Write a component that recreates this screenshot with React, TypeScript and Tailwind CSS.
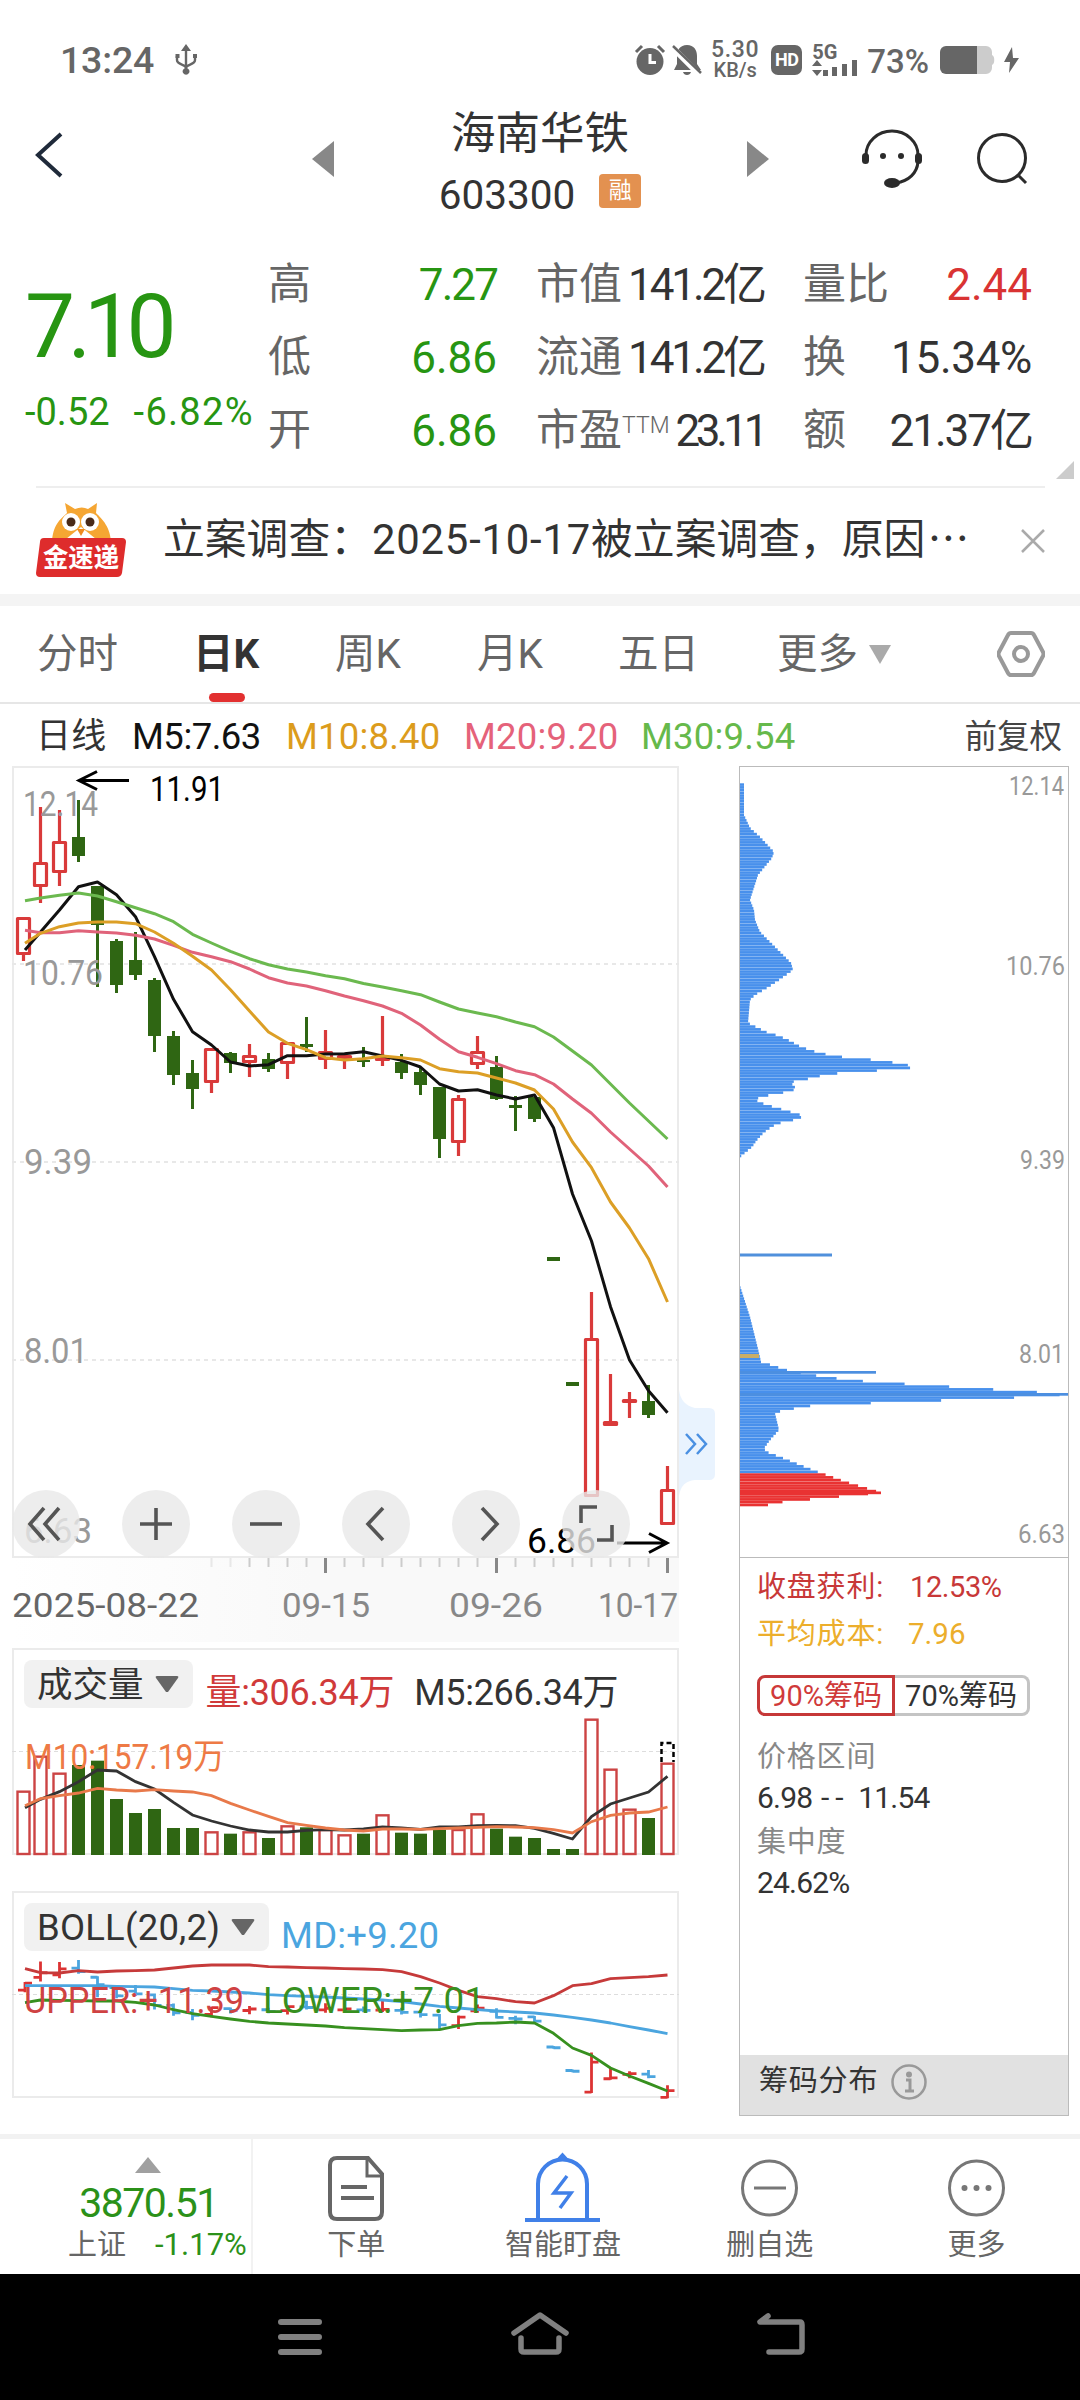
import React, { FC, ReactNode } from "react";

const RED = "#d93a3a";
const GREEN = "#2f6613";

// one row per trading day: up / down, high, body top, body bottom, low
type Candle = [string, number, number, number, number];

const candles: Candle[] = [
  ["u", 917, 917, 955, 961],
  ["u", 807, 862, 887, 903],
  ["u", 810, 841, 873, 886],
  ["d", 800, 837, 856, 862],
  ["d", 886, 886, 925, 987],
  ["d", 939, 941, 985, 993],
  ["d", 932, 960, 975, 980],
  ["d", 978, 980, 1036, 1052],
  ["d", 1031, 1036, 1075, 1085],
  ["d", 1060, 1073, 1089, 1109],
  ["u", 1048, 1048, 1083, 1093],
  ["d", 1052, 1053, 1063, 1073],
  ["u", 1044, 1055, 1063, 1077],
  ["d", 1053, 1059, 1069, 1072],
  ["u", 1042, 1042, 1064, 1079],
  ["d", 1017, 1044, 1047, 1052],
  ["u", 1030, 1051, 1060, 1069],
  ["u", 1055, 1055, 1060, 1069],
  ["d", 1047, 1060, 1062, 1067],
  ["u", 1016, 1057, 1061, 1066],
  ["d", 1054, 1062, 1073, 1079],
  ["d", 1067, 1072, 1085, 1095],
  ["d", 1087, 1087, 1139, 1158],
  ["u", 1095, 1098, 1143, 1156],
  ["u", 1036, 1051, 1065, 1069],
  ["d", 1056, 1067, 1099, 1100],
  ["d", 1096, 1105, 1108, 1131],
  ["d", 1097, 1097, 1119, 1122],
  ["d", 1257, 1257, 1261, 1261],
  ["d", 1382, 1382, 1386, 1386],
  ["u", 1292, 1338, 1497, 1497],
  ["u", 1374, 1421, 1426, 1426],
  ["u", 1392, 1399, 1403, 1418],
  ["d", 1385, 1401, 1415, 1418],
  ["u", 1466, 1489, 1525, 1525],
];

const ma5 = [950, 932, 910, 886.7, 882, 894.7, 916.7, 956.7, 999.3, 1031.7, 1045, 1062, 1066, 1064.7, 1055.7, 1055.7, 1054, 1053.7, 1051.7, 1056, 1060.3, 1067, 1084, 1091, 1089.7, 1095, 1099, 1095, 1127.7, 1194, 1241, 1306.7, 1360, 1390.7, 1412.7];
const ma10 = [943.3, 933.3, 926.7, 923, 922, 922, 923.7, 932, 943.3, 956.3, 970, 989.7, 1011, 1032, 1043.3, 1049.7, 1057.7, 1060, 1058.7, 1056, 1057.7, 1060, 1068.7, 1071.7, 1073, 1078, 1083, 1090, 1109, 1142, 1167.7, 1202, 1228, 1258.7, 1302];
const ma20 = [930.3, 932.7, 932.7, 930.7, 932, 933, 935.3, 939, 945.3, 952.3, 956.7, 961.7, 969, 977.7, 983, 986, 990.7, 996, 1000.7, 1006, 1013.3, 1025, 1039.3, 1051.7, 1057.3, 1063.7, 1070.7, 1074.7, 1084, 1099, 1113.3, 1132, 1149, 1166, 1187];
const ma30 = [900.7, 898, 895.3, 893, 896, 901.7, 907.7, 913.7, 921.7, 934.3, 943, 951.3, 958.7, 964.7, 969, 972, 975.7, 978.7, 983.5, 987, 990.7, 994.7, 1002, 1009, 1013, 1016.7, 1022, 1026.7, 1037, 1051, 1065, 1084, 1103, 1121, 1139];

// sub charts, in thirds of a pixel from the top of each chart
const volume = [452, 347, 398, 375, 362, 477, 519, 507, 564, 564, 574, 581, 574, 594, 556, 562, 567, 583, 581, 523, 578, 581, 569, 567, 520, 566, 590, 594, 627, 627, 236, 386, 506, 534, 368];
const volMa5 = [503, 478, 455, 425, 390, 393, 425, 447, 487, 525, 543, 558, 570, 576, 576, 571, 569, 570, 567, 561, 564, 568, 561, 561, 557, 556, 557, 565, 580, 597, 530, 492, 474, 456, 409];
const volMa10 = [497, 476, 467, 459, 445, 450, 453, 449, 453, 456, 467, 490, 510, 529, 548, 556, 564, 570, 573, 567, 567, 568, 566, 564, 562, 560, 561, 563, 569, 579, 545, 526, 519, 516, 501];
const upper = [296, 308, 309, 302, 306, 303, 302, 300, 294, 288, 285, 285, 285, 290, 291, 293, 294, 296, 297, 299, 305, 320, 339, 361, 380, 386, 395, 399, 377, 347, 341, 326, 323, 320, 315];
const middle = [347, 347, 347, 347, 347, 349, 350, 351, 356, 361, 363, 366, 369, 374, 377, 379, 381, 384, 387, 390, 395, 402, 409, 414, 419, 423, 426, 429, 435, 442, 450, 459, 470, 480, 491];
const lower = [398, 390, 391, 392, 393, 393, 397, 405, 419, 431, 439, 447, 454, 459, 462, 465, 468, 473, 476, 479, 482, 480, 479, 467, 460, 459, 456, 459, 490, 534, 556, 594, 618, 640, 663];

// chip distribution outline: [y, width]
const chipsTop: [number, number][] = [
  [783, 4], [815, 4], [828, 10], [837, 20], [852, 34], [858, 32], [875, 18], [900, 10], [910, 14], [920, 15], [932, 20], [947, 35], [963, 51], [970, 53], [980, 39], [988, 27], [995, 15], [1000, 10], [1023, 8], [1032, 26], [1036, 39], [1040, 48], [1047, 61], [1052, 76], [1055, 89], [1057.7, 107], [1060.4, 139], [1063.3, 158], [1066, 172], [1069, 169], [1071.7, 118], [1074.4, 86], [1077, 77], [1080, 63], [1082.4, 50], [1085, 53], [1088.4, 56], [1091, 52], [1093.7, 38], [1096.4, 23], [1099.4, 15], [1102, 19], [1104.7, 26], [1107.4, 35], [1110, 44], [1112.7, 53], [1115.7, 63], [1118.4, 60], [1121, 50], [1123.7, 37], [1129.4, 28], [1133.4, 23], [1140, 17], [1147, 12], [1157, 0],
];
const chipsBottom: [number, number][] = [
  [1286, 0], [1317, 10], [1353, 19], [1362, 21], [1363.4, 26], [1366.7, 36], [1370, 46], [1375, 71], [1377.7, 91], [1380.4, 111], [1383.3, 154], [1386, 198], [1388.7, 241], [1391.4, 285], [1394.3, 328], [1397, 293], [1399.7, 220], [1402.6, 147], [1405.3, 74], [1408, 58], [1410.7, 42], [1413.4, 35], [1430, 39], [1440, 30], [1448.4, 24], [1451.7, 26], [1454.4, 33], [1457, 40], [1471, 75], [1473.4, 82], [1481.7, 105], [1492.7, 141], [1495.4, 113], [1498, 85], [1500.7, 57], [1503.7, 28], [1505, 28],
];

const cx = (i: number) => 21.5 + i * 19;
const toLine = (ys: number[]) =>
  ys.map((y, i) => `${i === 0 ? 25 : cx(i)},${y}`).join(" ");
const third = (top: number, ys: number[]) => ys.map((y) => top + y / 3);

const widthAt = (points: [number, number][], y: number) => {
  for (let i = 1; i < points.length; i++) {
    const [y0, w0] = points[i - 1];
    const [y1, w1] = points[i];
    if (y <= y1) return w0 + ((w1 - w0) * Math.max(0, y - y0)) / (y1 - y0);
  }
  return 0;
};

interface LabelProps {
  x: number;
  y: number;
  w: number;
  size?: number;
  fill?: string;
  children: string;
}

const Label: FC<LabelProps> = ({ x, y, w, size = 35, fill = "#999", children }) => (
  <text x={x} y={y} fontSize={size} fill={fill} textLength={w} lengthAdjust="spacingAndGlyphs">
    {children}
  </text>
);

const StatusBar: FC = () => (
  <div className="h-[100px] pt-5 pl-[60px] pr-[60px] flex items-center justify-between text-[#666]">
    <div className="flex items-center">
      <span className="text-[37.500px] font-medium tracking-[-0.2px]">13:24</span>
      <svg className="ml-[20px]" width="24" height="32" viewBox="0 0 24 32" fill="none" stroke="#666" strokeWidth="2.4">
        <path d="M12 5v21M3 12v4c0 5 9 4 9 8M21 12v4c0 5-9 4-9 8" />
        <path d="M12 0l5 7H7z M12 24a3.4 3.4 0 1 0 .1 0zM1.500 10h4v4h-4zM19 10h4v4h-4z" fill="#666" stroke="none" />
      </svg>
    </div>
    <div className="flex items-center">
      <svg width="32" height="32" viewBox="0 0 32 32">
        <circle cx="16" cy="17.500" r="13.500" fill="#666" />
        <path d="M16 10v8.500h6" fill="none" stroke="#fff" strokeWidth="3" />
        <path d="M2 8l6-6M30 8l-6-6" stroke="#666" strokeWidth="3" />
      </svg>
      <svg className="ml-[5px]" width="32" height="32" viewBox="0 0 32 32">
        <path d="M16 1c7 0 10 5 10 11v8l4 6H3l3-6v-8C6 6 9 1 16 1zM12 28h8c-1 4-7 4-8 0z" fill="#666" />
        <path d="M1 3l28 28" stroke="#fff" strokeWidth="6" />
        <path d="M2 2l28 27" stroke="#666" strokeWidth="2.500" />
      </svg>
      <div className="ml-[7px] w-[50px] flex flex-col items-center font-medium">
        <span className="text-[23px] leading-[20px] tracking-[0.7px]">5.30</span>
        <span className="text-[20px] leading-[21px]">KB/s</span>
      </div>
      <span className="ml-[11px] w-[31px] h-[30px] rounded-[7px] bg-[#666] text-white text-[18px] leading-[30px] font-bold text-center tracking-[-0.5px]">
        HD
      </span>
      <div className="ml-[10px] w-[46px] flex flex-col">
        <span className="text-[20px] leading-[15px] font-bold">5G</span>
        <svg width="46" height="16" viewBox="0 0 46 16" fill="#666">
          <path d="M5 0l5 6H0zM5 16l5-6H0zM11 10h5v6h-5zM20 7h5v9h-5zM30 4h5v12h-5zM40-1h5v17h-5z" />
        </svg>
      </div>
      <span className="ml-[9px] mt-[2px] text-[33px] leading-none font-medium">73%</span>
      <svg className="ml-[11px]" width="55" height="28" viewBox="0 0 55 28">
        <path d="M36 0h10a6 6 0 0 1 6 6v3c3 1 3 9 0 10v3a6 6 0 0 1-6 6H36z" fill="#ccc" />
        <path d="M6 0h31v28H6a6 6 0 0 1-6-6V6a6 6 0 0 1 6-6z" fill="#666" />
      </svg>
      <svg className="ml-[8px]" width="17" height="26" viewBox="0 0 17 26" fill="#666">
        <path d="M9 0L1 15h6l-1 11L16 11h-6z" />
      </svg>
    </div>
  </div>
);

const Header: FC = () => (
  <header className="h-[140px] pl-[35px] pr-[52px] flex items-center justify-between">
    <svg className="-mt-[30px]" width="28" height="46" viewBox="0 0 28 46" fill="none" stroke="#1f2a3a" strokeWidth="4">
      <path d="M26 2L3 23l23 21" />
    </svg>
    <div className="ml-[156px] flex items-center">
      <svg className="-mt-[22px]" width="22" height="36" viewBox="0 0 22 36" fill="#888">
        <path d="M22 0v36L0 18z" />
      </svg>
      <div className="w-[413px] -mt-[9px] flex flex-col items-center">
        <h1 className="text-[44.500px] leading-[60px] text-[#333]">海南华铁</h1>
        <div className="h-[64px] flex items-center">
          <span className="text-[40.500px] text-[#333]">603300</span>
          <span className="ml-[24px] -mt-[9px] w-[42px] h-[34px] rounded-[4px] bg-[#e39150] text-white text-[23px] leading-[33px] text-center">
            融
          </span>
        </div>
      </div>
      <svg className="-mt-[22px]" width="22" height="36" viewBox="0 0 22 36" fill="#888">
        <path d="M0 0v36l22-18z" />
      </svg>
    </div>
    <div className="-mt-[22px] flex items-center gap-[54px]">
      <svg width="62" height="60" viewBox="0 0 62 60" fill="none" stroke="#2b2b2b" strokeWidth="3">
        <path d="M5 26a26 24 0 0 1 52 0M57 33c-1 11-9 19-22 21" />
        <rect x="1" y="24" width="7" height="11" rx="3.500" fill="#2b2b2b" stroke="none" />
        <rect x="54" y="24" width="7" height="11" rx="3.500" fill="#2b2b2b" stroke="none" />
        <ellipse cx="31" cy="54" rx="8" ry="5" fill="#2b2b2b" stroke="none" />
        <circle cx="22" cy="27" r="3" fill="#2b2b2b" stroke="none" />
        <circle cx="40" cy="27" r="3" fill="#2b2b2b" stroke="none" />
      </svg>
      <svg width="51" height="52" viewBox="0 0 51 52" fill="none" stroke="#2b2b2b" strokeWidth="3">
        <circle cx="25" cy="25" r="23.500" />
        <path d="M41 42l8 8" />
      </svg>
    </div>
  </header>
);

const stats = [
  { label: "高", value: "7.27", color: "text-[#279512] tracking-[-1.9px]" },
  { label: "市值", value: "141.2亿", color: "text-[#333] tracking-[-3.1px]" },
  { label: "量比", value: "2.44", color: "text-[#d93333]" },
  { label: "低", value: "6.86", color: "text-[#279512]" },
  { label: "流通", value: "141.2亿", color: "text-[#333] tracking-[-3.1px]" },
  { label: "换", value: "15.34%", color: "text-[#333] tracking-[-0.3px]" },
  { label: "开", value: "6.86", color: "text-[#279512]" },
  { label: "市盈", sup: "TTM", value: "23.11", color: "text-[#333] tracking-[-4.4px]" },
  { label: "额", value: "21.37亿", color: "text-[#333] tracking-[-2px]" },
];

const Quote: FC = () => (
  <section className="relative h-[246px] flex">
    <div className="w-[268px] pl-[25px] pt-[37px] text-[#279512] whitespace-nowrap">
      <div className="text-[89px] leading-[100px] tracking-[-7.300px]">7.10</div>
      <div className="mt-[10px] flex gap-[24px] text-[38px] leading-[50px]">
        <span>-0.52</span>
        <span className="tracking-[1.3px]">-6.82%</span>
      </div>
    </div>
    <div className="pt-[8px] grid grid-cols-[229px_228px_229px] auto-rows-[73px] gap-x-[39px] whitespace-nowrap">
      {stats.map((item) => (
        <div key={item.label} className="flex items-center justify-between text-[43px] leading-none">
          <span className="flex text-[#666]">
            {item.label}
            {item.sup && <sup className="mt-[5px] text-[23px] leading-none top-0 font-light">{item.sup}</sup>}
          </span>
          <span className={`text-[44px] ${item.color}`}>{item.value}</span>
        </div>
      ))}
    </div>
    <svg className="absolute right-[6px] bottom-[7px]" width="18" height="18" viewBox="0 0 18 18" fill="#ccc">
      <path d="M18 0v18H0z" />
    </svg>
  </section>
);

const News: FC = () => (
  <section className="ml-9 mr-[35px] h-[108px] border-t-2 border-[#eee] flex items-center">
    <svg className="-mt-[2px]" width="90" height="76" viewBox="0 0 90 76">
      <path d="M16 42C16 22 26 16 31 11L29 1l10 6q7-3 13 0l9-6-1 10c6 6 15 14 15 31z" fill="#f5a633" />
      <path d="M30 37l15-12 15 12v6H30z" fill="#fff" />
      <circle cx="35" cy="20" r="9" fill="#fff" />
      <circle cx="54" cy="20" r="9" fill="#fff" />
      <circle cx="35" cy="20" r="4.500" fill="#4a2a18" />
      <circle cx="54" cy="20" r="4.500" fill="#4a2a18" />
      <path d="M41 27l4 7 4-7z" fill="#ee8a20" />
      <path d="M8 36h78q4 0 4 4l-4 31q-1 4-5 4H4q-4 0-4-4l4-31q0-4 4-4z" fill="#de2c2c" />
      <text x="7" y="65" fontSize="26" fontWeight="700" fill="#fff" textLength="76" lengthAdjust="spacingAndGlyphs">金速递</text>
    </svg>
    <p className="ml-[37px] -mt-[5px] flex-1 text-[41.800px] text-[#333] whitespace-nowrap">
      立案调查：<span className="tracking-[0.8px]">2025-10-17</span>被立案调查，原因
      <span className="ml-[2px] font-['Noto_Sans_CJK_SC']">⋯</span>
    </p>
    <svg width="24" height="24" viewBox="0 0 24 24" stroke="#aaa" strokeWidth="2.500">
      <path d="M1 1l22 22M23 1L1 23" />
    </svg>
  </section>
);

const tabs = [
  { name: "分时", style: "w-[156px]" },
  { name: "日K", style: "w-[142px] text-[#333] font-bold" },
  { name: "周K", style: "w-[142px]" },
  { name: "月K", style: "w-[141px]" },
  { name: "五日", style: "w-[159px]" },
  { name: "更多", style: "w-[91px]" },
];

const Tabs: FC = () => (
  <nav className="h-[98px] pl-[37px] pr-[35px] border-b-2 border-[#e6e6e6] flex items-center text-[40.500px] text-[#666]">
    {tabs.map((tab, index) => (
      <div key={tab.name} className={`relative h-full leading-[97px] ${tab.style}`}>
        {tab.name}
        {index === 1 && <span className="absolute left-[16px] bottom-0 w-[36px] h-[9px] rounded-full bg-[#e23030]" />}
      </div>
    ))}
    <svg width="24" height="20" viewBox="0 0 24 20" fill="#aaa">
      <path d="M1 1h22L12 20z" />
    </svg>
    <svg className="ml-auto" width="48" height="46" viewBox="0 0 48 46" fill="none" stroke="#999" strokeWidth="4">
      <path d="M14 2h20q2 0 3 2l9 17q1 2 0 4l-9 17q-1 2-3 2H14q-2 0-3-2L2 25q-1-2 0-4l9-17q1-2 3-2z" />
      <circle cx="24" cy="23" r="7" />
    </svg>
  </nav>
);

const MaRow: FC = () => (
  <div className="h-[62px] pt-[4px] pl-[36px] pr-[18px] flex items-center text-[36.500px] tracking-[0.2px] whitespace-nowrap">
    <span className="w-[96px] text-[35px] text-[#333]">日线</span>
    <span className="w-[154px] text-[#111] tracking-[-0.5px]">M5:7.63</span>
    <span className="w-[178px] text-[#dc9c1c]">M10:8.40</span>
    <span className="w-[177px] text-[#e5627a]">M20:9.20</span>
    <span className="text-[#66b94b]">M30:9.54</span>
    <span className="ml-auto text-[32.500px] text-[#444] tracking-normal">前复权</span>
  </div>
);

const KLine: FC = () => (
  <svg width="667" height="876" viewBox="12 766 667 876">
    <defs>
      <linearGradient id="axis" x1="0" x2="1" y1="0" y2="0">
        <stop offset="0" stopColor="#fff" />
        <stop offset="0.45" stopColor="#f9f9f9" />
        <stop offset="1" stopColor="#f9f9f9" />
      </linearGradient>
    </defs>
    <rect x="12" y="1558" width="667" height="84" fill="url(#axis)" />
    <rect x="13" y="767" width="665" height="790" fill="none" stroke="#ebebeb" strokeWidth="2" />
    {[964, 1162, 1360].map((y) => (
      <path key={y} d={`M12 ${y}H679`} stroke="#e8e8e8" strokeWidth="2" strokeDasharray="4 4" />
    ))}
    {candles.map(([dir, high, top, bottom, low], i) => {
      const x = i === 0 ? 23.5 : cx(i);
      if (dir === "d") {
        return (
          <g key={i} fill={GREEN}>
            <rect x={x - 1.5} y={high} width="3" height={low - high} />
            <rect x={x - 6.5} y={top} width="13" height={bottom - top} />
          </g>
        );
      }
      return (
        <g key={i} stroke={RED} strokeWidth="3.200" fill="none">
          <path d={`M${x} ${high}V${top}M${x} ${bottom}V${low}`} />
          <rect x={x - 6} y={top + 1.5} width="12" height={Math.max(bottom - top - 3, 1)} strokeLinejoin="round" />
        </g>
      );
    })}
    <g fill="none" strokeWidth="3" strokeLinejoin="round">
      <polyline points={toLine(ma5)} stroke="#111" />
      <polyline points={toLine(ma20)} stroke="#e0637a" />
      <polyline points={toLine(ma30)} stroke="#6bb94f" />
      <polyline points={toLine(ma10)} stroke="#dc9f26" />
    </g>
    <Label x={23} y={816} w={75}>12.14</Label>
    <Label x={23} y={985} w={80}>10.76</Label>
    <Label x={24} y={1174} w={68}>9.39</Label>
    <Label x={24} y={1363} w={64}>8.01</Label>
    <Label x={24} y={1543} w={68}>6.63</Label>
    <Label x={150} y={801} w={74} fill="#000">11.91</Label>
    <Label x={527} y={1553} w={69} fill="#000">6.86</Label>
    <g stroke="#000" strokeWidth="3" fill="none">
      <path d="M129 780.500H79M97 771.500l-18 9 18 9M617 1543h50M649 1533.500l18 9.500-18 9.500" />
    </g>
    {Array.from({ length: 25 }, (_, k) => k + 10).map((i) => {
      const major = i === 16 || i === 25 || i === 34;
      return (
        <path
          key={i}
          d={`M${cx(i)} 1558v${major ? 15 : 9}`}
          stroke={major ? "#888" : "#ccc"}
          strokeWidth={major ? 3 : 2}
          opacity={i < 12 ? 0.4 : 1}
        />
      );
    })}
    <Label x={12} y={1617} w={187} size={34} fill="#666">2025-08-22</Label>
    <Label x={282} y={1617} w={88} size={34} fill="#888">09-15</Label>
    <Label x={449} y={1617} w={94} size={34} fill="#888">09-26</Label>
    <Label x={598} y={1617} w={80} size={34} fill="#888">10-17</Label>
  </svg>
);

const controls = [
  "M28 14L14 30l14 16M43 14L29 30l14 16",
  "M30 14v32M14 30h32",
  "M14 30h32",
  "M37 14L22 30l15 16",
  "M26 14l15 16-15 16",
  "M15 29V13h16M46 31v15H31",
];

const Controls: FC = () => (
  <div className="absolute left-0 top-[724px] flex gap-[42px]">
    {controls.map((d) => (
      <span key={d} className="w-[68px] h-[68px] rounded-full bg-[#e8e8e8]/80 flex items-center justify-center">
        <svg width="60" height="60" viewBox="0 0 60 60" fill="none" stroke="#555" strokeWidth="3.600">
          <path d={d} />
        </svg>
      </span>
    ))}
  </div>
);

const Pill: FC<{ children: ReactNode }> = ({ children }) => (
  <span className="h-12 px-[13px] rounded-lg bg-[#f1f1f1] text-[#333] flex items-center gap-[10px]">
    {children}
    <svg width="26" height="18" viewBox="0 0 26 18" fill="#666">
      <path d="M3 1h20q2 0 1 2L14 17h-2L2 3q-1-2 1-2z" />
    </svg>
  </span>
);

const Volume: FC = () => (
  <div className="relative mt-[6px] h-[208px] text-[36px] whitespace-nowrap">
    <svg className="absolute inset-0" width="667" height="208" viewBox="12 1648 667 208">
      <rect x="13" y="1649" width="665" height="205" fill="none" stroke="#ebebeb" strokeWidth="2" />
      <path d="M12 1751.500H679" stroke="#ddd" strokeDasharray="4 3" />
      {volume.map((v, i) => {
        const x = i === 0 ? 23.5 : cx(i);
        const y = 1640 + v / 3;
        return candles[i][0] === "d" ? (
          <rect key={i} x={x - 6.5} y={y} width="13" height={1855 - y} fill={GREEN} />
        ) : (
          <rect key={i} x={x - 6} y={y + 1} width="12" height={1853 - y} fill="#fff" stroke="#cc4444" strokeWidth="2.400" />
        );
      })}
      <path d="M661.500 1762v-19h12v19" fill="none" stroke="#000" strokeWidth="2.500" strokeDasharray="5 3" />
      <polyline points={toLine(third(1640, volMa5))} fill="none" stroke="#333" strokeWidth="2.800" />
      <polyline points={toLine(third(1640, volMa10))} fill="none" stroke="#e8794a" strokeWidth="2.800" />
      <Label x={25} y={1769} w={200} fill="#ee7a45">M10:157.19万</Label>
    </svg>
    <div className="relative pl-3 pt-3 flex items-start">
      <Pill>
        <span className="pt-[4px] text-[35.500px]">成交量</span>
      </Pill>
      <span className="ml-[13px] mt-[7px] leading-[52px] text-[#d03a3a] tracking-[-0.3px]">量:306.34万</span>
      <span className="ml-[20px] mt-[7px] leading-[52px] text-[#333] tracking-[-0.3px]">M5:266.34万</span>
    </div>
  </div>
);

const BLUE = "#4ba5df";

const bollY = (y: number) => 1870 + (277 + (y - 806.7) * 0.564) / 3;

const Boll: FC = () => (
  <div className="relative mt-[35px] h-[208px] text-[36.500px] whitespace-nowrap">
    <svg className="absolute inset-0 overflow-visible" width="667" height="208" viewBox="12 1891 667 208">
      <rect x="13" y="1892" width="665" height="205" fill="none" stroke="#ebebeb" strokeWidth="2" />
      <path d="M12 1994.500H679" stroke="#ddd" strokeDasharray="4 3" />
      {candles.map(([dir, high, top, bottom, low], i) => {
        const x = i === 0 ? 25 : cx(i);
        const up = dir === "u";
        const open = bollY(up ? bottom : top);
        const close = bollY(up ? top : bottom);
        return (
          <path
            key={i}
            d={`M${x - 7} ${open}H${x}M${x} ${close}H${x + 7}M${x} ${bollY(high) - 1}V${bollY(low) + 1}`}
            stroke={up ? "#dc3333" : BLUE}
            strokeWidth="2.800"
          />
        );
      })}
      <g fill="none" strokeWidth="2.800" strokeLinejoin="round">
        <polyline points={toLine(third(1870, upper))} stroke="#c63a3a" />
        <polyline points={toLine(third(1870, middle))} stroke={BLUE} />
        <polyline points={toLine(third(1870, lower))} stroke="#37901f" />
      </g>
      <Label x={24} y={2012.500} w={220} size={36} fill="#cf4242">UPPER:+11.39</Label>
      <Label x={263} y={2012.500} w={222} size={36} fill="#37901f">LOWER:+7.01</Label>
    </svg>
    <div className="relative pl-3 pt-3 flex items-start">
      <Pill>
        <span className="pt-[3px] tracking-[0.2px]">BOLL(20,2)</span>
      </Pill>
      <span className="ml-[12px] mt-[7px] leading-[52px] text-[#4ba5df] tracking-[0.2px]">MD:+9.20</span>
    </div>
  </div>
);

const Bars: FC<{ points: [number, number][]; from: number; to: number }> = ({ points, from, to }) => {
  const rows = Array.from({ length: Math.floor((to - from) / 2.75) }, (_, k) => from + k * 2.75);
  return (
    <>
      {rows.map((y, k) => (
        <rect
          key={y}
          x="740"
          y={y}
          width={widthAt(points, y + 1.4)}
          height={k % 2 ? 2.75 : 2.6}
          fill={y > 1471 ? "#e93232" : "#4890ec"}
        />
      ))}
    </>
  );
};

const ChipChart: FC = () => (
  <svg width="328" height="790" viewBox="740 767 328 790">
    <Bars points={chipsTop} from={783.3} to={1158} />
    <Bars points={chipsBottom} from={1286.3} to={1506.5} />
    <rect x="740" y="1253.500" width="92" height="3" fill="#5090dc" />
    <rect x="740" y="1371" width="136" height="2.700" fill="#4c8fe0" />
    <rect x="740" y="1393" width="328" height="2.700" fill="#4c8fe0" />
    <rect x="740" y="1491.500" width="141" height="2.700" fill="#e93232" />
    <rect x="740" y="1354" width="19" height="4" fill="#c8ad68" />
    <Label x={1009} y={795} w={55} size={25}>12.14</Label>
    <Label x={1006} y={975} w={59} size={25}>10.76</Label>
    <Label x={1020} y={1169} w={45} size={25}>9.39</Label>
    <Label x={1019} y={1363} w={45} size={25}>8.01</Label>
    <Label x={1018} y={1543} w={47} size={25}>6.63</Label>
  </svg>
);

const ChipPanel: FC = () => (
  <aside className="ml-[60px] w-[330px] h-[1350px] border border-[#bbb] flex flex-col">
    <ChipChart />
    <div className="flex-1 border-t border-[#bbb] pl-[17px] pt-[6px] text-[29px] whitespace-nowrap text-[#333]">
      <div className="h-[47px] flex items-center text-[#c83838]">
        <span className="w-[153px] tracking-[0.8px]">收盘获利:</span>
        <span className="tracking-[-0.4px]">12.53%</span>
      </div>
      <div className="h-[47px] flex items-center text-[#ecae2c]">
        <span className="w-[151px] tracking-[0.8px]">平均成本:</span>
        <span className="text-[29.500px]">7.96</span>
      </div>
      <div className="mt-[17px] flex h-[41px] text-[29px] leading-[36px] text-center">
        <span className="w-[138px] border-[3px] border-[#c63838] rounded-l-lg text-[#d03a3a]">90%筹码</span>
        <span className="w-[135px] border-[3px] border-l-0 border-[#c4c4c4] rounded-r-lg">70%筹码</span>
      </div>
      <div className="mt-[20px] leading-[43px]">
        <div className="text-[#888] tracking-[0.8px]">价格区间</div>
        <div className="-mt-[2px] text-[30px] leading-[41px] tracking-[-0.8px]">
          6.98 <span className="mx-[2px] tracking-[6px]">--</span> 11.54
        </div>
        <div className="mt-[3px] text-[#888] tracking-[0.8px]">集中度</div>
        <div className="-mt-[2px] text-[30px] leading-[41px] tracking-[-0.8px]">24.62%</div>
      </div>
    </div>
    <div className="h-[60px] pl-[19px] pb-[6px] bg-[#e1e1e1] flex items-center text-[29px] tracking-[0.8px] text-[#333]">
      筹码分布
      <svg className="ml-[12px]" width="38" height="38" viewBox="0 0 38 38" fill="none" stroke="#999" strokeWidth="2.500">
        <circle cx="19" cy="19" r="16.500" />
        <path d="M16 17h4v11M15 28h9" strokeWidth="3" />
        <circle cx="19" cy="11.500" r="3" fill="#999" stroke="none" />
      </svg>
    </div>
  </aside>
);

const actions = [
  {
    name: "下单",
    icon: (
      <g stroke="#666" strokeWidth="4">
        <path d="M18 7h31l14 16v38q0 7-7 7H18q-7 0-7-7V14q0-7 7-7z" strokeWidth="4" />
        <path d="M48 8v17h15" strokeWidth="3" />
        <path d="M22 36h26M22 47h33" />
      </g>
    ),
  },
  {
    name: "智能盯盘",
    icon: (
      <g stroke="#4080e8" strokeWidth="4">
        <path d="M0 69h75M13 68V33a24.500 24.500 0 0 1 49 0v35" />
        <path d="M32 9l5.500-6L43 9z" fill="#4080e8" strokeWidth="2" />
        <path d="M42 25L29 42h17L35 57" strokeWidth="3.500" />
      </g>
    ),
  },
  {
    name: "删自选",
    icon: (
      <g stroke="#777" strokeWidth="3">
        <circle cx="37.500" cy="37" r="27" />
        <path d="M22 37h32" />
      </g>
    ),
  },
  {
    name: "更多",
    icon: (
      <g fill="#777">
        <circle cx="37.500" cy="37" r="27" fill="none" stroke="#777" strokeWidth="3" />
        <circle cx="25.500" cy="37" r="3" />
        <circle cx="37.500" cy="37" r="3" />
        <circle cx="49.500" cy="37" r="3" />
      </g>
    ),
  },
];

const BottomBar: FC = () => (
  <footer className="h-[140px] border-t-[5px] border-[#f2f2f2] flex whitespace-nowrap">
    <div className="w-[253px] border-r-2 border-[#f2f2f2] pt-[18px] flex flex-col items-end">
      <svg className="mr-[89px]" width="28" height="16" viewBox="0 0 28 16" fill="#a0a0a0">
        <path d="M14 0l13 16H1z" />
      </svg>
      <span className="mt-[6px] mr-[33px] text-[41px] leading-[48px] text-[#2b9119] tracking-[-1.5px]">3870.51</span>
      <div className="mr-[4px] -mt-px leading-[38px] flex gap-[29px]">
        <span className="text-[29px] text-[#666]">上证</span>
        <span className="text-[31px] text-[#2b9119]">-1.17%</span>
      </div>
    </div>
    {actions.map((item) => (
      <div key={item.name} className="w-[207px] pt-[12px] flex flex-col items-center">
        <svg width="75" height="75" viewBox="0 0 75 75" fill="none">
          {item.icon}
        </svg>
        <span className="text-[29px] leading-[38px] text-[#666]">{item.name}</span>
      </div>
    ))}
  </footer>
);

const NavBar: FC = () => (
  <div className="h-[126px] bg-black pb-[6px] flex items-center justify-center gap-[182px]">
    <svg width="56" height="56" viewBox="0 0 56 56" stroke="#808080" strokeWidth="6" strokeLinecap="round">
      <path d="M9 16h38M9 31h38M9 46h38" />
    </svg>
    <svg width="60" height="56" viewBox="0 0 60 56" fill="none" stroke="#808080" strokeWidth="5.500" strokeLinecap="round" strokeLinejoin="round">
      <path d="M4 27L30 9l26 18M11 32v11q0 3 3 3h32q3 0 3-3V32" />
    </svg>
    <svg width="56" height="56" viewBox="0 0 56 56" fill="none" stroke="#808080" strokeWidth="5.500" strokeLinecap="round" strokeLinejoin="round">
      <path d="M16 10l-8 6h40q2 0 2 3v24q0 3-3 3H17" />
    </svg>
  </div>
);

const App: FC = () => {
  return (
    <main className="w-[1080px] h-[2400px] bg-white overflow-hidden font-[Roboto,'Noto_Sans_CJK_SC',sans-serif]">
      <StatusBar />
      <Header />
      <Quote />
      <News />
      <div className="h-3 bg-[#f4f4f4]" />
      <Tabs />
      <MaRow />
      <div className="h-[1368px] pl-3 flex items-start">
        <section className="relative w-[667px] flex flex-col">
          <KLine />
          <Controls />
          <svg className="absolute left-full top-[624px]" width="36" height="106" viewBox="0 0 36 106" fill="none">
            <path d="M0 0q2 15 16 18h14q6 0 6 6v60q0 6-6 6H16Q2 91 0 106z" fill="#e9f3fe" />
            <path d="M7 44l9 10-9 10M18 44l9 10-9 10" stroke="#4a90e2" strokeWidth="2.500" />
          </svg>
          <Volume />
          <Boll />
        </section>
        <ChipPanel />
      </div>
      <BottomBar />
      <NavBar />
    </main>
  );
};

export default App;
